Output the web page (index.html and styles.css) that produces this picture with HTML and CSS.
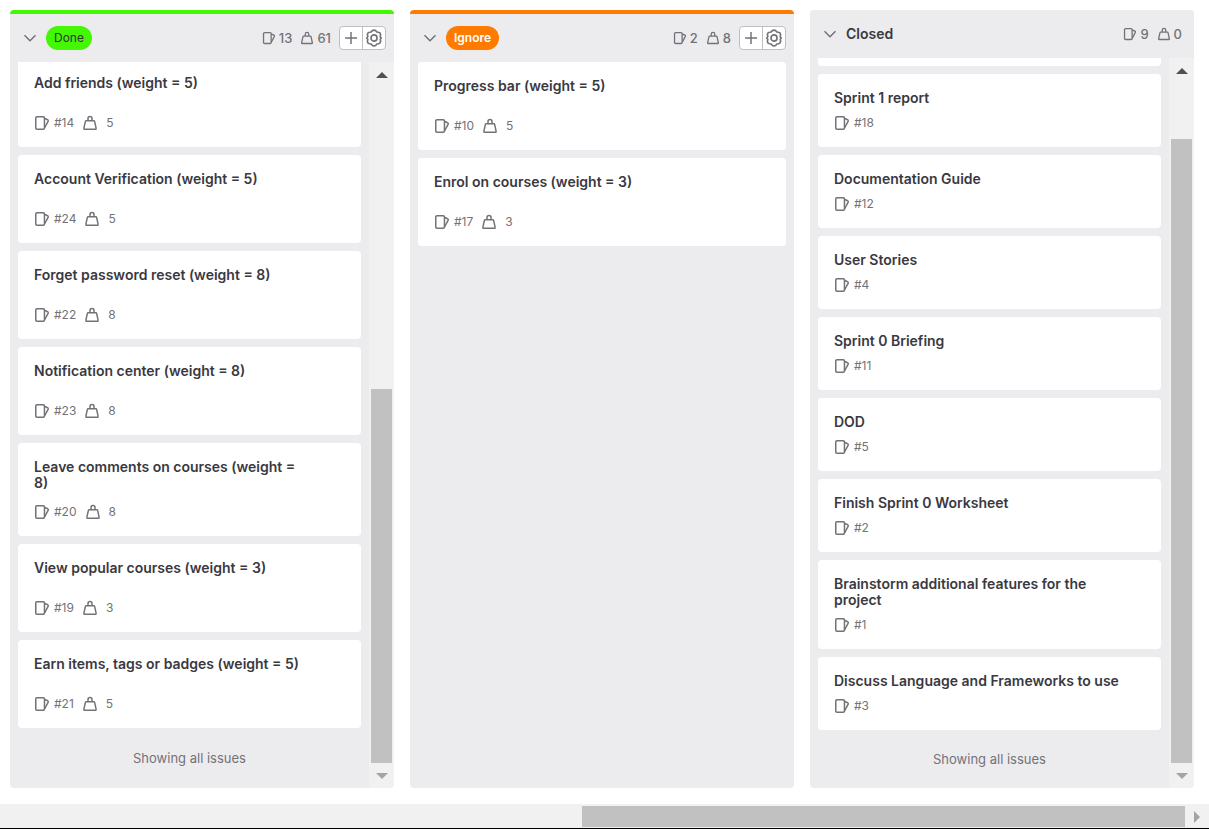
FILE: index.html
```html
<!DOCTYPE html>
<html lang="en">
<head>
<meta charset="utf-8">
<title>Issue board</title>
<link rel="stylesheet" href="styles.css">
</head>
<body>
<svg class="sprite" aria-hidden="true">
  <symbol id="issue" viewBox="0 0 16 16"><rect x="1.75" y="1.750" width="8.700" height="12.500" rx="1.200"/><path d="M10.400 3.200l3.200 1.500c.6.300.8.800.6 1.400l-3.700 6.900"/></symbol>
  <symbol id="weight" viewBox="0 0 16 16"><path d="M4.200 5.750h7.600c.4 0 .7.200.8.600l1.550 7.100c.1.400-.2.800-.6.800H2.450c-.4 0-.7-.4-.6-.8l1.550-7.100c.1-.4.400-.6.800-.6z"/><path d="M6 5.700V3.600a2 2 0 0 1 4 0v2.100"/></symbol>
  <symbol id="chevron" viewBox="0 0 16 16"><path d="M2.5 5.2L8 10.7l5.500-5.500"/></symbol>
  <symbol id="plus" viewBox="0 0 16 16"><path d="M8 2v12M2 8h12"/></symbol>
  <symbol id="gear" viewBox="0 0 16 16"><path d="M6.300 1.700Q8 .2 9.700 1.700L10.600 2.700 12 2.900Q14.200 3.400 13.800 5.500L13.500 6.800 14.400 8 13.500 9.200 13.800 10.500Q14.200 12.600 12 13.100L10.600 13.300 9.700 14.300Q8 15.800 6.300 14.300L5.400 13.300 4 13.100Q1.800 12.600 2.200 10.500L2.500 9.200 1.600 8 2.500 6.800 2.200 5.500Q1.800 3.400 4 2.900L5.400 2.700z"/><circle cx="8" cy="8" r="2.700"/></symbol>
</svg>

<main class="board">
  <section class="column column--done">
    <header class="column__head">
      <button class="toggle" aria-label="Collapse Done"><svg class="icon"><use href="#chevron"/></svg></button>
      <h2 class="label label--done">Done</h2>
      <div class="counts">
        <span class="count"><svg class="icon"><use href="#issue"/></svg>13</span>
        <span class="count"><svg class="icon"><use href="#weight"/></svg>61</span>
      </div>
      <div class="actions">
        <button aria-label="New issue"><svg class="icon"><use href="#plus"/></svg></button>
        <button aria-label="List settings"><svg class="icon icon--gear"><use href="#gear"/></svg></button>
      </div>
    </header>
    <div class="column__body">
      <div class="list list--scrolled">
        <article class="card card--weighted"><h3 class="card__title">Add friends (weight = 5)</h3><div class="meta"><svg class="icon"><use href="#issue"/></svg><span>#14</span><svg class="icon icon--weight"><use href="#weight"/></svg><span class="meta__weight">5</span></div></article>
        <article class="card card--weighted"><h3 class="card__title">Account Verification (weight = 5)</h3><div class="meta"><svg class="icon"><use href="#issue"/></svg><span>#24</span><svg class="icon icon--weight"><use href="#weight"/></svg><span class="meta__weight">5</span></div></article>
        <article class="card card--weighted"><h3 class="card__title">Forget password reset (weight = 8)</h3><div class="meta"><svg class="icon"><use href="#issue"/></svg><span>#22</span><svg class="icon icon--weight"><use href="#weight"/></svg><span class="meta__weight">8</span></div></article>
        <article class="card card--weighted"><h3 class="card__title">Notification center (weight = 8)</h3><div class="meta"><svg class="icon"><use href="#issue"/></svg><span>#23</span><svg class="icon icon--weight"><use href="#weight"/></svg><span class="meta__weight">8</span></div></article>
        <article class="card card--weighted"><h3 class="card__title">Leave comments on courses (weight = 8)</h3><div class="meta"><svg class="icon"><use href="#issue"/></svg><span>#20</span><svg class="icon icon--weight"><use href="#weight"/></svg><span class="meta__weight">8</span></div></article>
        <article class="card card--weighted"><h3 class="card__title">View popular courses (weight = 3)</h3><div class="meta"><svg class="icon"><use href="#issue"/></svg><span>#19</span><svg class="icon icon--weight"><use href="#weight"/></svg><span class="meta__weight">3</span></div></article>
        <article class="card card--weighted"><h3 class="card__title">Earn items, tags or badges (weight = 5)</h3><div class="meta"><svg class="icon"><use href="#issue"/></svg><span>#21</span><svg class="icon icon--weight"><use href="#weight"/></svg><span class="meta__weight">5</span></div></article>
        <p class="list__end">Showing all issues</p>
      </div>
      <div class="scroll">
        <button class="scroll__step" aria-label="Scroll up"><i class="arrow arrow--up"></i></button>
        <div class="scroll__gap scroll__gap--done"></div>
        <div class="scroll__thumb scroll__thumb--done"></div>
        <button class="scroll__step" aria-label="Scroll down"><i class="arrow arrow--down"></i></button>
      </div>
    </div>
  </section>

  <section class="column column--ignore">
    <header class="column__head">
      <button class="toggle" aria-label="Collapse Ignore"><svg class="icon"><use href="#chevron"/></svg></button>
      <h2 class="label label--ignore">Ignore</h2>
      <div class="counts">
        <span class="count"><svg class="icon"><use href="#issue"/></svg>2</span>
        <span class="count"><svg class="icon"><use href="#weight"/></svg>8</span>
      </div>
      <div class="actions">
        <button aria-label="New issue"><svg class="icon"><use href="#plus"/></svg></button>
        <button aria-label="List settings"><svg class="icon icon--gear"><use href="#gear"/></svg></button>
      </div>
    </header>
    <div class="column__body">
      <div class="list">
        <article class="card card--weighted"><h3 class="card__title">Progress bar (weight = 5)</h3><div class="meta"><svg class="icon"><use href="#issue"/></svg><span>#10</span><svg class="icon icon--weight"><use href="#weight"/></svg><span class="meta__weight">5</span></div></article>
        <article class="card card--weighted"><h3 class="card__title">Enrol on courses (weight = 3)</h3><div class="meta"><svg class="icon"><use href="#issue"/></svg><span>#17</span><svg class="icon icon--weight"><use href="#weight"/></svg><span class="meta__weight">3</span></div></article>
      </div>
    </div>
  </section>

  <section class="column">
    <header class="column__head column__head--plain">
      <button class="toggle" aria-label="Collapse Closed"><svg class="icon"><use href="#chevron"/></svg></button>
      <h2 class="column__title">Closed</h2>
      <div class="counts">
        <span class="count"><svg class="icon"><use href="#issue"/></svg>9</span>
        <span class="count"><svg class="icon"><use href="#weight"/></svg>0</span>
      </div>
    </header>
    <div class="column__body">
      <div class="list">
        <div class="card card--edge"></div>
        <article class="card"><h3 class="card__title">Sprint 1 report</h3><div class="meta"><svg class="icon"><use href="#issue"/></svg><span>#18</span></div></article>
        <article class="card"><h3 class="card__title">Documentation Guide</h3><div class="meta"><svg class="icon"><use href="#issue"/></svg><span>#12</span></div></article>
        <article class="card"><h3 class="card__title">User Stories</h3><div class="meta"><svg class="icon"><use href="#issue"/></svg><span>#4</span></div></article>
        <article class="card"><h3 class="card__title">Sprint 0 Briefing</h3><div class="meta"><svg class="icon"><use href="#issue"/></svg><span>#11</span></div></article>
        <article class="card"><h3 class="card__title">DOD</h3><div class="meta"><svg class="icon"><use href="#issue"/></svg><span>#5</span></div></article>
        <article class="card"><h3 class="card__title">Finish Sprint 0 Worksheet</h3><div class="meta"><svg class="icon"><use href="#issue"/></svg><span>#2</span></div></article>
        <article class="card"><h3 class="card__title">Brainstorm additional features for the project</h3><div class="meta"><svg class="icon"><use href="#issue"/></svg><span>#1</span></div></article>
        <article class="card"><h3 class="card__title">Discuss Language and Frameworks to use</h3><div class="meta"><svg class="icon"><use href="#issue"/></svg><span>#3</span></div></article>
        <p class="list__end">Showing all issues</p>
      </div>
      <div class="scroll">
        <button class="scroll__step" aria-label="Scroll up"><i class="arrow arrow--up"></i></button>
        <div class="scroll__gap scroll__gap--closed"></div>
        <div class="scroll__thumb scroll__thumb--closed"></div>
        <button class="scroll__step" aria-label="Scroll down"><i class="arrow arrow--down"></i></button>
      </div>
    </div>
  </section>
</main>

<div class="hscroll">
  <div class="hscroll__gap"></div>
  <div class="hscroll__thumb"></div>
  <button class="hscroll__step" aria-label="Scroll right"><i class="arrow arrow--right"></i></button>
</div>
</body>
</html>
```
FILE: styles.css
```css
* { box-sizing: border-box; }

body {
  display: flex;
  flex-direction: column;
  height: 100vh;
  margin: 0;
  overflow: hidden;
  background: #fff;
  color: #3a393f;
  font-family: Inter, "Noto Sans", sans-serif;
  font-size: 14px;
}

h2, h3, p { margin: 0; }

button {
  display: flex;
  align-items: center;
  justify-content: center;
  margin: 0;
  padding: 0;
  border: 0;
  background: none;
  color: inherit;
  font: inherit;
}

.sprite { position: absolute; width: 0; height: 0; }

.icon {
  flex: none;
  width: 16px;
  height: 16px;
  fill: none;
  stroke: #737278;
  stroke-width: 1.5;
}
.icon--gear { width: 18px; height: 18px; }

.board {
  display: flex;
  flex: 1;
  gap: 16px;
  min-height: 0;
  padding: 10px 15px 16px 10px;
}

.column {
  display: flex;
  flex: 1;
  flex-direction: column;
  min-width: 0;
  overflow: hidden;
  border-radius: 4px;
  background: #ececef;
}
.column--done { border-top: 4px solid #44f704; }
.column--ignore { border-top: 4px solid #ff7b00; }

.column__head {
  display: flex;
  flex: none;
  align-items: center;
  height: 48px;
  padding: 0 8px 0 12px;
}
.column__head--plain { padding-right: 12px; }

.toggle { margin-right: 8px; }

.label {
  padding: 0 8px;
  border-radius: 12px;
  font-size: 12px;
  font-weight: 400;
  line-height: 24px;
}
.label--done { background: #44f704; color: #333238; }
.label--ignore { background: #ff7b00; color: #fff; font-weight: 600; }

.column__title { font-size: 14px; font-weight: 600; line-height: 16px; }

.counts {
  display: flex;
  gap: 8px;
  margin-left: auto;
  color: #737278;
  font-size: 13px;
  font-weight: 500;
  line-height: 16px;
}
.count { display: flex; align-items: center; gap: 3px; }
.count .icon { width: 14px; height: 14px; }

.actions {
  display: flex;
  margin-left: 8px;
  border: 1px solid #bfbfc3;
  border-radius: 4px;
  background: #fff;
}
.actions button { width: 22px; height: 22px; }
.actions button + button { width: 23px; border-left: 1px solid #bfbfc3; }

.column__body { display: flex; flex: 1; min-height: 0; }

.list {
  display: flex;
  flex: 1;
  flex-direction: column;
  min-width: 0;
  overflow: hidden;
  padding: 0 8px;
}
.list--scrolled { justify-content: flex-end; }

.card {
  flex: none;
  padding: 16px;
  border-radius: 4px;
  background: #fff;
}
.card + .card { margin-top: 8px; }
.card--edge { height: 8px; padding: 0; border-radius: 0 0 4px 4px; }

.card__title {
  margin-bottom: 9px;
  padding-right: 16px;
  font-size: 14px;
  font-weight: 600;
  line-height: 16px;
}
.card--weighted .card__title {
  min-height: 27px;
  margin-bottom: 13px;
  padding-right: 40px;
}

.meta {
  display: flex;
  align-items: center;
  gap: 4px;
  color: #737278;
  font-size: 12px;
  line-height: 16px;
}
.icon--weight { margin-left: 4px; }
.meta__weight { margin-left: 4px; }

.list__end {
  display: flex;
  flex: 1 0 56px;
  align-items: center;
  justify-content: center;
  color: #737278;
  font-size: 13px;
}
.list--scrolled .list__end { flex: none; height: 60px; }

.scroll {
  display: flex;
  flex: none;
  flex-direction: column;
  width: 25px;
  padding: 0 2px;
  background: #f1f1f1;
}
.scroll__step { height: 25px; }
.scroll__thumb, .hscroll__thumb { background: #c1c1c1; }
.scroll__gap--done { flex: 302; }
.scroll__thumb--done { flex: 374; }
.scroll__gap--closed { flex: 56; }
.scroll__thumb--closed { flex: 624; }

.arrow { border: 6px solid transparent; }
.arrow--up { border-top: 0; border-bottom-color: #505050; }
.arrow--down { border-bottom: 0; border-top-color: #a3a3a3; }
.arrow--right { border-right: 0; border-left-color: #a3a3a3; }

.hscroll {
  display: flex;
  flex: none;
  height: 25px;
  padding: 2px 0 1px;
  border-bottom: 1px solid #000;
  background: #f1f1f1;
}
.hscroll__gap { flex: 582; }
.hscroll__thumb { flex: 603; }
.hscroll__step { width: 24px; }
```
